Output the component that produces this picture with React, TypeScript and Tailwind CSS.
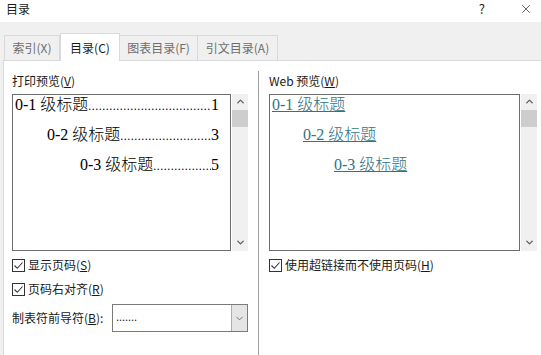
import { X, ChevronUp, ChevronDown } from 'lucide-react';

const ui = { fontFamily: '"Noto Sans CJK SC", "Liberation Sans", sans-serif' };
const serif = { fontFamily: '"Liberation Serif", "Noto Sans CJK SC", serif' };

const DOTS = '.'.repeat(120);

function Scrollbar() {
  return (
    <div className="w-[16px] ml-px bg-[#f0f0f0] flex flex-col items-center">
      <ChevronUp size={11} strokeWidth={3} className="text-[#606060] mt-[2px]" />
      <div className="w-full h-[17px] bg-[#cdcdcd] mt-[3px]" />
      <div className="flex-1" />
      <ChevronDown size={11} strokeWidth={3} className="text-[#606060] mb-[3px]" />
    </div>
  );
}

function PrintLine({ indent, label, page }: { indent: string; label: string; page: string }) {
  return (
    <div className={`flex items-baseline h-[30px] leading-[30px] pr-[11px] ${indent}`}>
      <span className="whitespace-nowrap">{label}</span>
      <span className="flex-1 min-w-0 overflow-hidden whitespace-nowrap text-[12px] tracking-[0.5px]">{DOTS}</span>
      <span>{page}</span>
    </div>
  );
}

function Check({ label, u, rest }: { label: string; u: string; rest?: string }) {
  return (
    <div className="flex items-center h-[20px] gap-[3px]">
      <div className="w-[13px] h-[13px] border border-[#333] bg-white flex items-center justify-center">
        <svg width="11" height="11" viewBox="0 0 11 11">
          <path d="M1.5 5.5 L4.3 8.3 L9.5 2.5" fill="none" stroke="#333" strokeWidth="1.1" />
        </svg>
      </div>
      <span>
        {label}(<span className="underline">{u}</span>){rest}
      </span>
    </div>
  );
}

export default function App() {
  return (
    <div className="w-[541px] h-[355px] overflow-hidden bg-white text-[12px] text-[#1a1a1a] flex flex-col" style={ui}>
      {/* title bar */}
      <div className="h-[22px] flex items-start pt-[1px] pl-[6px] pr-[8px]">
        <span className="leading-[16px] text-[12px]">目录</span>
        <span className="ml-auto mr-[34px] leading-[16px] text-[13px] text-[#222]">?</span>
        <X size={14} strokeWidth={1.2} className="mt-[1px] text-[#222]" />
      </div>

      {/* tab strip */}
      <div className="h-[38px] bg-[#f0f0f0] flex items-end pl-[4px]">
        <div className="w-[56px] h-[25px] border border-b-0 border-[#d9d9d9] text-[#6d6d6d] flex items-center justify-center">
          索引(X)
        </div>
        <div className="w-[60px] h-[28px] -mb-px bg-white border border-b-0 border-[#d9d9d9] flex items-center justify-center z-10">
          目录(C)
        </div>
        <div className="w-[78px] h-[25px] border border-b-0 border-l-0 border-[#d9d9d9] text-[#6d6d6d] flex items-center justify-center">
          图表目录(F)
        </div>
        <div className="w-[80px] h-[25px] border border-b-0 border-l-0 border-[#d9d9d9] text-[#6d6d6d] flex items-center justify-center">
          引文目录(A)
        </div>
      </div>

      {/* panel */}
      <div className="flex-1 bg-[#f0f0f0] pl-[3px] flex">
        <div className="flex-1 min-w-0 bg-white border-l border-t border-[#d9d9d9] flex pt-[10px]">
          {/* left column */}
          <div className="w-[236px] shrink-0 ml-[8px] flex flex-col">
            <div className="h-[20px] leading-[20px]">
              打印预览(<span className="underline">V</span>)
            </div>
            <div className="flex h-[157px] mt-[3px]">
              <div className="flex-1 min-w-0 overflow-hidden border border-[#6e6e6e] pl-[2px] text-[16px] font-light text-black" style={serif}>
                <div className="-mt-[5px]">
                  <PrintLine indent="pl-0" label="0-1 级标题" page="1" />
                  <PrintLine indent="pl-[32px]" label="0-2 级标题" page="3" />
                  <PrintLine indent="pl-[65px]" label="0-3 级标题" page="5" />
                </div>
              </div>
              <Scrollbar />
            </div>
            <div className="mt-[4px] flex flex-col gap-[4px]">
              <Check label="显示页码" u="S" />
              <Check label="页码右对齐" u="R" />
            </div>
            <div className="flex items-center mt-[5px]">
              <span className="w-[100px]">
                制表符前导符(<span className="underline">B</span>):
              </span>
              <div className="flex-1 h-[28px] border border-[#7a7a7a] flex">
                <span className="flex-1 pl-[3px] leading-[24px] text-[12px]" style={serif}>.......</span>
                <div className="w-[16px] bg-[#e5e5e5] border-l border-[#adadad] flex items-center justify-center">
                  <ChevronDown size={11} strokeWidth={1.5} className="text-[#444]" />
                </div>
              </div>
            </div>
          </div>

          {/* separator */}
          <div className="w-px shrink-0 bg-[#a0a0a0] ml-[10px]" />

          {/* right column */}
          <div className="w-[268px] shrink-0 ml-[10px] flex flex-col">
            <div className="h-[20px] leading-[20px]">
              Web 预览(<span className="underline">W</span>)
            </div>
            <div className="flex h-[157px] mt-[3px]">
              <div className="flex-1 min-w-0 overflow-hidden border border-[#6e6e6e] pl-[2px] text-[16px] font-light text-[#2f7385]" style={serif}>
                <div className="-mt-[5px]">
                  <div className="h-[30px] leading-[30px]"><span className="underline">0-1 级标题</span></div>
                  <div className="h-[30px] leading-[30px] pl-[31px]"><span className="underline">0-2 级标题</span></div>
                  <div className="h-[30px] leading-[30px] pl-[62px]"><span className="underline">0-3 级标题</span></div>
                </div>
              </div>
              <Scrollbar />
            </div>
            <div className="mt-[4px]">
              <Check label="使用超链接而不使用页码" u="H" />
            </div>
          </div>
        </div>
      </div>
    </div>
  );
}
